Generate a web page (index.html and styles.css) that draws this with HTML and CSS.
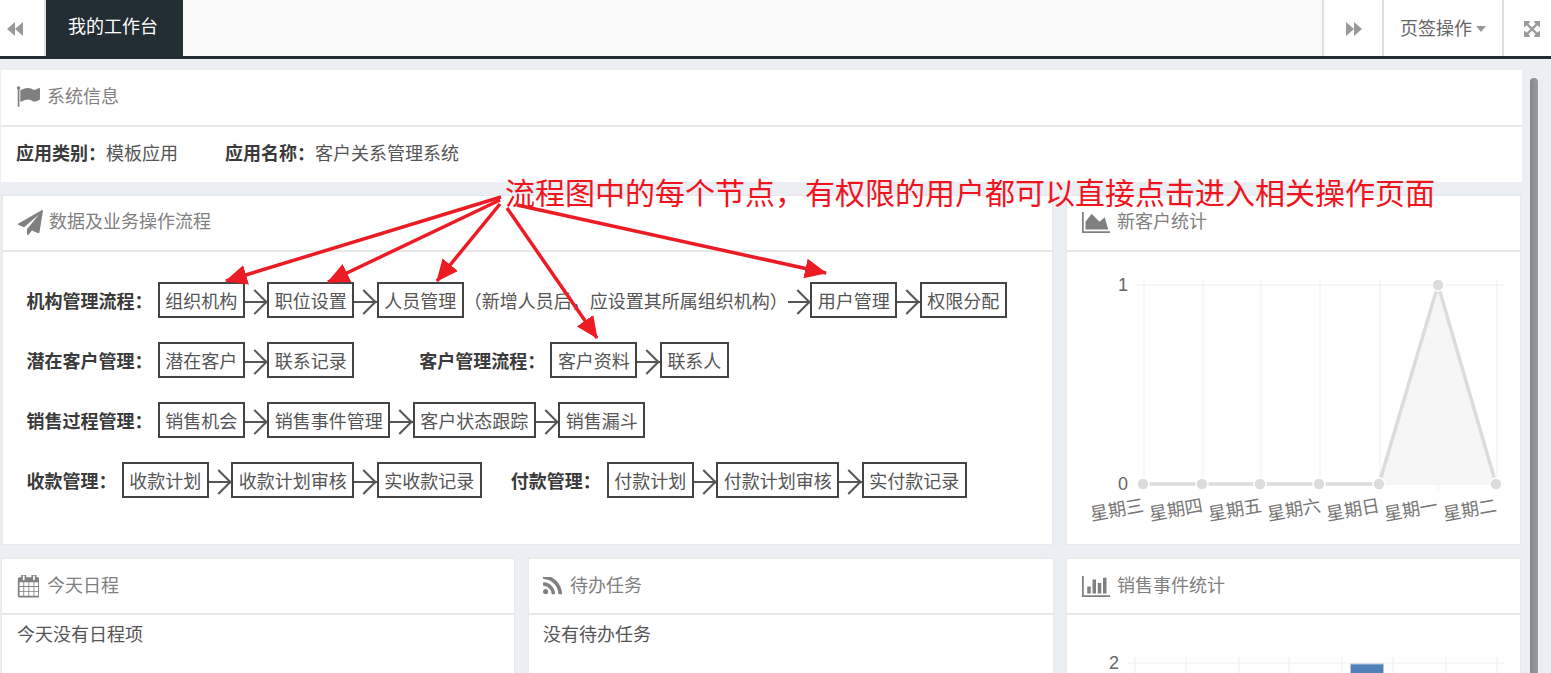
FILE: index.html
```html
<!DOCTYPE html>
<html lang="zh-CN">
<head>
    <meta charset="UTF-8">
    <meta name="viewport" content="width=device-width, initial-scale=1.0">
    <title>我的工作台</title>
    <link rel="stylesheet" href="styles.css">
</head>
<body>
    <div class="topbar">
        <div class="tab-btn tab-prev">
            <svg class="tab-icon" viewBox="0 0 16 14"><path d="M8 0v14L0 7zM16 0v14L8 7z"/></svg>
        </div>
        <div class="tab-active">我的工作台</div>
        <div class="tab-space"></div>
        <div class="tab-btn tab-next">
            <svg class="tab-icon" viewBox="0 0 16 14"><path d="M0 0v14l8-7zM8 0v14l8-7z"/></svg>
        </div>
        <div class="tab-btn tab-menu">页签操作<span class="caret"></span></div>
        <div class="tab-btn tab-full">
            <svg class="tab-icon" viewBox="128 128 1536 1536"><path d="M1411 541l-355 355 355 355 144-144q29-31 70-14 39 17 39 59v448q0 26-19 45t-45 19h-448q-42 0-59-40-17-39 14-69l144-144-355-355-355 355 144 144q31 30 14 69-17 40-59 40h-448q-26 0-45-19t-19-45v-448q0-42 40-59 39-17 69 14l144 144 355-355-355-355-144 144q-19 19-45 19-12 0-24-5-40-17-40-59v-448q0-26 19-45t45-19h448q42 0 59 40 17 39-14 69l-144 144 355 355 355-355-144-144q-31-30-14-69 17-40 59-40h448q26 0 45 19t19 45v448q0 42-39 59-13 5-25 5-26 0-45-19z"/></svg>
        </div>
    </div>

    <div class="page">
        <div class="main">
            <div class="panel panel-info">
                <div class="panel-head">
                    <svg class="head-icon icon-flag" viewBox="0 128 1792 1536"><path d="M320 256q0 72-64 110v1266q0 13-9.5 22.5t-22.5 9.5h-64q-13 0-22.5-9.5t-9.5-22.5v-1266q-64-38-64-110 0-53 37.5-90.5t90.5-37.5 90.5 37.5 37.5 90.5zm1472 64v763q0 25-12.5 38.5t-39.5 27.5q-215 116-369 116-61 0-123.5-22t-108.5-48-115.5-48-142.5-22q-192 0-464 146-17 9-33 9-26 0-45-19t-19-45v-742q0-32 31-55 21-14 79-43 236-120 421-120 107 0 200 29t219 88q38 19 88 19 54 0 117.5-21t110-47 88-47 54.5-21q26 0 45 19t19 45z"/></svg>
                    系统信息
                </div>
                <div class="info-body">
                    <b>应用类别：</b>模板应用
                    <b class="info-second">应用名称：</b>客户关系管理系统
                </div>
            </div>

            <div class="row row-flow">
                <div class="panel panel-flow">
                    <div class="panel-head">
                        <svg class="head-icon icon-plane" viewBox="0 0 1792 1792"><path d="M1764 11q33 24 27 64l-256 1536q-5 29-32 45-14 8-31 8-11 0-24-5l-453-185-242 295q-18 23-49 23-13 0-22-4-19-7-30.5-23.5t-11.5-36.5v-349l864-1059-1069 925-395-162q-37-14-40-55-2-40 32-59l1664-960q15-9 32-9 20 0 36 11z"/></svg>
                        数据及业务操作流程
                    </div>
                    <div class="flow-body">
                        <div class="flow-row">
                            <b class="flow-label">机构管理流程：</b>
                            <span class="node">组织机构</span><i class="arrow"></i>
                            <span class="node">职位设置</span><i class="arrow"></i>
                            <span class="node">人员管理</span>
                            <span class="flow-note">（新增人员后，应设置其所属组织机构）</span><i class="arrow"></i>
                            <span class="node">用户管理</span><i class="arrow"></i>
                            <span class="node">权限分配</span>
                        </div>
                        <div class="flow-row">
                            <b class="flow-label">潜在客户管理：</b>
                            <span class="node">潜在客户</span><i class="arrow"></i>
                            <span class="node">联系记录</span>
                            <b class="flow-label group-wide">客户管理流程：</b>
                            <span class="node">客户资料</span><i class="arrow"></i>
                            <span class="node">联系人</span>
                        </div>
                        <div class="flow-row">
                            <b class="flow-label">销售过程管理：</b>
                            <span class="node">销售机会</span><i class="arrow"></i>
                            <span class="node">销售事件管理</span><i class="arrow"></i>
                            <span class="node">客户状态跟踪</span><i class="arrow"></i>
                            <span class="node">销售漏斗</span>
                        </div>
                        <div class="flow-row">
                            <b class="flow-label">收款管理：</b>
                            <span class="node">收款计划</span><i class="arrow"></i>
                            <span class="node">收款计划审核</span><i class="arrow"></i>
                            <span class="node">实收款记录</span>
                            <b class="flow-label group-narrow">付款管理：</b>
                            <span class="node">付款计划</span><i class="arrow"></i>
                            <span class="node">付款计划审核</span><i class="arrow"></i>
                            <span class="node">实付款记录</span>
                        </div>
                    </div>
                </div>

                <div class="panel panel-side">
                    <div class="panel-head">
                        <svg class="head-icon icon-chart" viewBox="0 128 2048 1536"><path d="M2048 1536v128h-2048v-1536h128v1408h1920zm-384-1024l256 896h-1664v-576l448-576 576 576z"/></svg>
                        新客户统计
                    </div>
                    <svg class="chart" width="453" height="291" viewBox="0 0 453 291">
                        <g class="grid">
                            <path d="M68 33H437M68 232H437"/>
                            <path d="M76 27V239M135 27V239M193 27V239M252 27V239M312 27V239M370 27V239M429 27V239"/>
                        </g>
                        <path class="area" d="M311 232L370 33L428 232Z"/>
                        <path class="line" d="M75 232H311L370 33L428 232"/>
                        <g class="dots">
                            <circle cx="75" cy="232" r="6"/><circle cx="134" cy="232" r="6"/>
                            <circle cx="192" cy="232" r="6"/><circle cx="251" cy="232" r="6"/>
                            <circle cx="311" cy="232" r="6"/><circle cx="370" cy="33" r="6"/>
                            <circle cx="428" cy="232" r="6"/>
                        </g>
                        <text class="tick" x="60" y="39">1</text>
                        <text class="tick" x="60" y="238">0</text>
                        <g class="days">
                            <text transform="translate(50 264) rotate(-10)">星期三</text>
                            <text transform="translate(109 264) rotate(-10)">星期四</text>
                            <text transform="translate(168 264) rotate(-10)">星期五</text>
                            <text transform="translate(227 264) rotate(-10)">星期六</text>
                            <text transform="translate(286 264) rotate(-10)">星期日</text>
                            <text transform="translate(344 264) rotate(-10)">星期一</text>
                            <text transform="translate(403 264) rotate(-10)">星期二</text>
                        </g>
                    </svg>
                </div>
            </div>

            <div class="row row-lower">
                <div class="panel panel-today">
                    <div class="panel-head">
                        <svg class="head-icon icon-calendar" viewBox="0 128 1664 1664"><path d="M192 1664h288v-288h-288v288zm352 0h320v-288h-320v288zm-352-352h288v-320h-288v320zm352 0h320v-320h-320v320zm-352-384h288v-288h-288v288zm736 736h320v-288h-320v288zm-384-736h320v-288h-320v288zm768 736h288v-288h-288v288zm-384-352h320v-320h-320v320zm-352-864v-288q0-13-9.5-22.5t-22.5-9.5h-64q-13 0-22.5 9.5t-9.5 22.5v288q0 13 9.5 22.5t22.5 9.5h64q13 0 22.5-9.5t9.5-22.5zm736 864h288v-320h-288v320zm-384-384h320v-288h-320v288zm384 0h288v-288h-288v288zm32-480v-288q0-13-9.5-22.5t-22.5-9.5h-64q-13 0-22.5 9.5t-9.5 22.5v288q0 13 9.5 22.5t22.5 9.5h64q13 0 22.5-9.5t9.5-22.5zm384-64v1280q0 52-38 90t-90 38h-1408q-52 0-90-38t-38-90v-1280q0-52 38-90t90-38h128v-96q0-66 47-113t113-47h64q66 0 113 47t47 113v96h384v-96q0-66 47-113t113-47h64q66 0 113 47t47 113v96h128q52 0 90 38t38 90z"/></svg>
                        今天日程
                    </div>
                    <div class="lower-body">今天没有日程项</div>
                </div>
                <div class="panel panel-todo">
                    <div class="panel-head">
                        <svg class="head-icon icon-rss" viewBox="192 256 1408 1408"><path d="M576 1344q0 80-56 136t-136 56-136-56-56-136 56-136 136-56 136 56 56 136zm512 123q2 28-17 48-18 21-47 21h-135q-25 0-43-16.5t-20-41.5q-22-229-184.5-391.5t-391.5-184.5q-25-2-41.5-20t-16.5-43v-135q0-29 21-47 17-17 43-17h5q160 13 306 80.5t259 181.5q114 113 181.5 259t80.5 306zm512 2q2 27-18 47-18 20-46 20h-143q-26 0-44.5-17.5t-19.5-42.5q-12-215-101-408.5t-231.5-336-336-231.5-408.5-102q-25-1-42.5-19.5t-17.5-43.5v-143q0-28 20-46 18-18 44-18h3q262 13 501.5 120t425.5 294q187 186 294 425.5t120 501.5z"/></svg>
                        待办任务
                    </div>
                    <div class="lower-body">没有待办任务</div>
                </div>
                <div class="panel panel-side">
                    <div class="panel-head">
                        <svg class="head-icon icon-chart" viewBox="0 128 2048 1536"><path d="M640 896v512h-256v-512h256zm384-512v1024h-256v-1024h256zm1024 1152v128h-2048v-1536h128v1408h1920zm-640-896v768h-256v-768h256zm384-384v1152h-256v-1152h256z"/></svg>
                        销售事件统计
                    </div>
                    <svg class="chart" width="453" height="200" viewBox="0 0 453 200">
                        <g class="grid">
                            <path d="M59 48H437"/>
                            <path d="M67 42V200M118 42V200M171 42V200M221 42V200M274 42V200M325 42V200M378 42V200M429 42V200"/>
                        </g>
                        <rect class="bar" x="282.500" y="49" width="33" height="151"/>
                        <text class="tick" x="51" y="54">2</text>
                    </svg>
                </div>
            </div>
        </div>

        <div class="scroll-col"><div class="scroll-thumb"></div></div>
    </div>

    <!-- red notes drawn over the page -->
    <div class="note-text">流程图中的每个节点，有权限的用户都可以直接点击进入相关操作页面</div>
    <svg class="note-arrows" width="1551" height="673" viewBox="0 0 1551 673">
        <defs>
            <marker id="head" markerUnits="userSpaceOnUse" markerWidth="22" markerHeight="20" refX="21" refY="10" orient="auto">
                <path d="M0 0L22 10L0 20Z" fill="#ed1c24"/>
            </marker>
        </defs>
        <g class="note-lines">
            <line x1="501" y1="197" x2="226" y2="281" marker-end="url(#head)"/>
            <line x1="500" y1="200" x2="328" y2="282" marker-end="url(#head)"/>
            <line x1="500" y1="204" x2="437" y2="281" marker-end="url(#head)"/>
            <line x1="507" y1="208" x2="597" y2="338" marker-end="url(#head)"/>
            <line x1="517" y1="205" x2="826" y2="273" marker-end="url(#head)"/>
        </g>
    </svg>
</body>
</html>
```

FILE: styles.css
```css
html, body {
    height: 100%;
    overflow: hidden;
}
body {
    margin: 0;
    padding: 0;
    background-color: #ebeef2;
    color: #555;
    font-family: "Liberation Sans", "Noto Sans CJK SC", sans-serif;
    font-size: 18px;
    line-height: 24px;
}

/* top tab bar */
.topbar {
    display: flex;
    height: 56px;
    background-color: #f9f9f9;
    border-bottom: 3px solid #232e34;
}
.tab-btn {
    display: flex;
    align-items: center;
    justify-content: center;
    box-sizing: border-box;
    padding-top: 1px;
    background-color: #fff;
    color: #666;
}
.tab-prev {
    width: 46px;
    padding-right: 14px;
    border-right: 2px solid #e0e0e0;
}
.tab-next {
    width: 60px;
    padding-left: 2px;
    border-left: 2px solid #e0e0e0;
}
.tab-menu {
    width: 120px;
    border-left: 2px solid #e0e0e0;
}
.tab-full {
    width: 49px;
    padding-left: 8px;
    border-left: 2px solid #e0e0e0;
}
.tab-icon {
    width: 16px;
    height: 16px;
    fill: #999;
}
.tab-active {
    width: 137px;
    box-sizing: border-box;
    padding-left: 22px;
    background-color: #232e34;
    color: #fff;
    line-height: 54px;
}
.tab-space {
    flex: 1;
}
.caret {
    width: 0;
    height: 0;
    margin-left: 4px;
    border-left: 5px solid transparent;
    border-right: 5px solid transparent;
    border-top: 6px solid #999;
}

/* page frame */
.page {
    display: flex;
}
.main {
    width: 1522px;
    padding-top: 11px;
}
.scroll-col {
    flex: 1;
    padding: 19px 13px 0 8px;
}
.scroll-thumb {
    height: 700px;
    border-radius: 4px 4px 0 0;
    background: linear-gradient(to right, #84878c, #999ca1);
}

/* panels */
.panel {
    box-sizing: border-box;
    background-color: #fff;
    border: 1px solid #e6e8ea;
}
.panel-head {
    display: flex;
    align-items: center;
    box-sizing: border-box;
    height: 56px;
    padding-left: 15px;
    border-bottom: 2px solid #e7e7e7;
    color: #808080;
}
.panel-info .panel-head,
.row-flow .panel-head {
    padding-bottom: 2px;
}
.head-icon {
    flex: none;
    fill: #808080;
    margin-right: 7px;
}
.icon-flag {
    width: 24px;
    height: 21px;
}
.icon-plane {
    width: 25px;
    height: 25px;
    margin-right: 6px;
}
.icon-chart {
    width: 28px;
    height: 21px;
}
.icon-calendar {
    width: 22px;
    height: 23px;
    margin-right: 8px;
}
.icon-rss {
    width: 19px;
    height: 19px;
    margin-left: -1px;
    margin-right: 8px;
}
.panel-info {
    margin-left: 1px;
    width: 1521px;
    height: 112px;
    border-width: 0;
}
.panel-info .panel-head {
    height: 57px;
}
.info-body {
    padding: 15px;
}
.info-second {
    margin-left: 42px;
}
b {
    color: #3a3a3a;
}

/* rows */
.row {
    display: flex;
    margin-top: 13px;
}
.row-flow {
    padding-left: 2px;
}
.panel-flow {
    width: 1051px;
    height: 350px;
    margin-right: 13px;
}
.panel-side {
    width: 455px;
}
.row-lower {
    padding-left: 1px;
}
.panel-today {
    width: 514px;
    height: 200px;
    margin-right: 13px;
}
.panel-todo {
    width: 526px;
    height: 200px;
    margin-right: 12px;
}
.lower-body {
    padding: 8px 15px;
}
.panel-todo .lower-body {
    padding-left: 14px;
}

/* flow chart rows */
.flow-body {
    padding: 30px 0 0 23.5px;
}
.flow-row {
    display: flex;
    align-items: center;
    height: 36px;
    margin-bottom: 24px;
    white-space: nowrap;
}
.flow-label {
    margin-top: 3px;
    margin-right: 5.2px;
}
.group-wide {
    margin-left: 65px;
}
.group-narrow {
    margin-left: 29px;
    margin-right: 6px;
}
.node {
    box-sizing: border-box;
    height: 36px;
    padding: 0 5.5px;
    border: 2px solid #444;
    line-height: 36px;
}
.flow-note {
    flex: none;
    margin-top: 3px;
}
.arrow {
    position: relative;
    flex: none;
    width: 22.5px;
    height: 2px;
    margin-top: 3px;
    background-color: #555;
}
.arrow::after {
    content: "";
    position: absolute;
    right: 3.5px;
    top: -8px;
    width: 18px;
    height: 18px;
    box-sizing: border-box;
    border-top: 2px solid #555;
    border-right: 2px solid #555;
    transform: rotate(45deg);
}

/* charts */
.chart {
    display: block;
    margin-left: 1px;
}
.grid path {
    fill: none;
    stroke: #efefef;
    stroke-width: 1;
}
.area {
    fill: #f6f6f6;
}
.line {
    fill: none;
    stroke: #dcdcdc;
    stroke-width: 3.5;
}
.dots circle {
    fill: #dcdcdc;
    stroke: #fff;
    stroke-width: 1.500;
}
.tick {
    fill: #666;
    font-size: 18px;
    text-anchor: end;
}
.days text {
    fill: #777;
    font-size: 18px;
    text-anchor: middle;
}
.bar {
    fill: #4f81b8;
    stroke: #b4c8dc;
    stroke-width: 1;
}

/* red notes */
.note-text {
    position: absolute;
    left: 505px;
    top: 172px;
    color: #f0141e;
    font-size: 30px;
    line-height: 44px;
    white-space: nowrap;
}
.note-arrows {
    position: absolute;
    left: 0;
    top: 0;
    pointer-events: none;
}
.note-lines line {
    stroke: #ed1c24;
    stroke-width: 3.500;
}
```
